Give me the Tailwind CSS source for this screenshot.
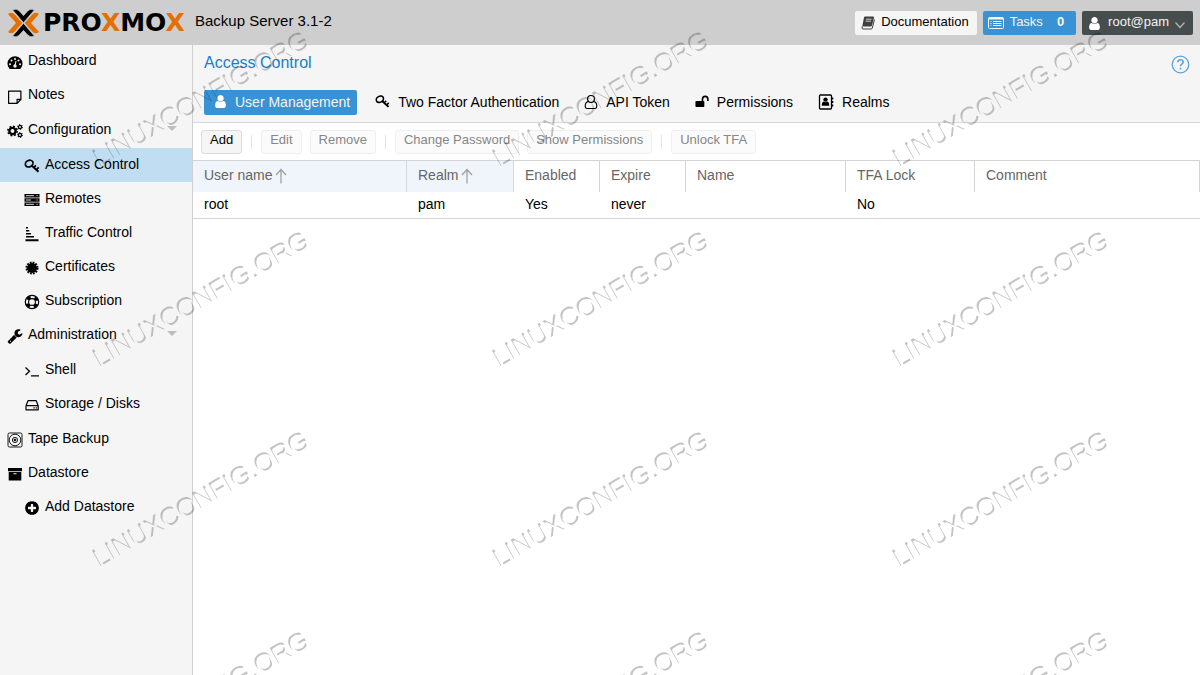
<!DOCTYPE html>
<html lang="en">
<head>
  <meta charset="utf-8">
  <meta name="viewport" content="width=device-width, initial-scale=1">
  <title>Proxmox Backup Server - Access Control</title>
  <script src="https://cdn.jsdelivr.net/npm/@tailwindcss/browser@4"></script>
</head>
<body class="min-h-screen flex flex-col bg-white text-black text-sm font-['Liberation_Sans',Arial,sans-serif]">

  <!-- shared icons -->
  <svg class="hidden" aria-hidden="true">
    <symbol id="i-user" viewBox="0 0 1792 1792"><path fill="currentColor" d="M1536 1399q0 109-62.5 187t-150.5 78h-854q-88 0-150.5-78t-62.5-187q0-85 8.5-160.5t31.5-152 58.5-131 94-89 134.5-34.5q131 128 313 128t313-128q76 0 134.5 34.5t94 89 58.5 131 31.5 152 8.5 160.5zm-256-887q0 159-112.5 271.5t-271.5 112.5-271.5-112.5-112.5-271.5 112.5-271.5 271.5-112.5 271.5 112.5 112.5 271.5z"/></symbol>
    <symbol id="i-key" viewBox="0 0 16 16">
      <g fill="none" stroke="currentColor">
        <ellipse cx="5.200" cy="5.600" rx="4" ry="3.200" stroke-width="1.700" transform="rotate(-28 5.200 5.600)"/>
        <path stroke-width="2" d="M7.600 7.400l6.900 6.300"/>
        <path stroke-width="1.700" d="M12.400 11.600l2.300-2.200M9.900 9.300l2-2"/>
      </g>
    </symbol>
    <symbol id="i-arrow" viewBox="0 0 12 16"><path fill="none" stroke="currentColor" stroke-width="1.300" d="M6 15.500V2M1 7l5-5.500L11 7"/></symbol>
  </svg>

  <header class="h-[45px] shrink-0 bg-[#cecece] flex items-center justify-between pl-2 pr-[7px]">
    <div class="flex items-center">
      <svg class="w-[31px] h-7" viewBox="0 0 93 84" fill="none" stroke-linejoin="round" aria-hidden="true">
        <path fill="#e57000" d="M0 15q12-8 21 2l22 25-22 25q-9 10-21 2l24-27z"/>
        <path fill="#e57000" d="M93 15q-12-8-21 2L50 42l22 25q9 10 21 2L69 42z"/>
        <path fill="#000" stroke="#cecece" stroke-width="2" d="M14 3q12-6 20 3l12.500 14L59 6q8-9 20-3L46.500 41z"/>
        <path fill="#000" stroke="#cecece" stroke-width="2" d="M14 81q12 6 20-3l12.500-14L59 78q8 9 20 3L46.500 43z"/>
      </svg>
      <span class="ml-1 w-[152px] font-['DejaVu_Sans',sans-serif] font-bold text-[25px] leading-7">PRO<span class="text-[#e57000]">X</span>MO<span class="text-[#e57000]">X</span></span>
      <span class="text-[15px] leading-5 pb-1">Backup Server 3.1-2</span>
    </div>
    <div class="flex items-center gap-1.5 text-[13px]">
      <button class="h-6 flex items-center gap-1.5 pl-1.5 pr-2 rounded-xs bg-[#f5f5f5]">
        <svg class="w-3.5 h-3.5 mt-px text-[#404040]" viewBox="0 0 14 14" aria-hidden="true">
          <path fill="currentColor" d="M4 .5h8q1.300 0 1 1.300L11 9.500q-.3 1-1.300 1H1.200L3 1.600Q3.200.5 4 .5z"/>
          <path fill="none" stroke="currentColor" d="M1.200 10.500q-.8 2.500.8 2.500h8.200q.8 0 1.100-1L13.500 3.500"/>
          <path stroke="#f5f5f5" stroke-width=".8" d="M5 3.200h5.500M4.600 5.200h5.500"/>
        </svg>
        <span class="pb-px">Documentation</span>
      </button>
      <button class="h-6 flex items-center gap-1.5 pl-[5px] pr-3 rounded-xs bg-[#3892d4] text-[#f5f5f5]">
        <svg class="w-4 h-3.5 mt-px" viewBox="0 0 16 14" fill="none" stroke="currentColor" aria-hidden="true">
          <rect x=".5" y="1.500" width="15" height="11" rx="1"/>
          <path stroke-width="2" d="M1 2.500h14"/>
          <path d="M2.500 5.500h1M5 5.500h8.500M2.500 7.500h1M5 7.500h8.500M2.500 9.500h1M5 9.500h8.500"/>
        </svg>
        <span class="pb-px">Tasks</span>
        <b class="pb-px ml-2">0</b>
      </button>
      <button class="h-6 flex items-center gap-1.5 pl-[5px] pr-2 rounded-xs bg-[#464d4d] text-[#f5f5f5]">
        <svg class="w-[15px] h-[15px] mt-px text-white" aria-hidden="true"><use href="#i-user"/></svg>
        <span class="pb-px">root@pam</span>
        <svg class="w-2.5 h-2 mt-1 text-[#b0b4b4]" viewBox="0 0 10 8" fill="none" stroke="currentColor" stroke-width="1.300" aria-hidden="true"><path d="M.5 1.500L5 6.500l4.500-5"/></svg>
      </button>
    </div>
  </header>

  <div class="flex-1 flex">
    <nav class="w-[193px] shrink-0 bg-[#f5f5f5] border-r border-[#d0d0d0]">
      <ul>
        <li>
          <a href="#" class="h-[34px] flex items-center gap-[5px] pl-[7px]">
            <svg class="w-4 h-4 mt-0.5" viewBox="0 0 16 16" aria-hidden="true">
              <path d="M2.300 13.500A7.500 7.500 0 1 1 13.700 13.500q-.4.500-1 .5H3.300q-.6 0-1-.5z"/>
              <g fill="#f5f5f5"><circle cx="3" cy="9.300" r="1"/><circle cx="4.500" cy="5.600" r="1"/><circle cx="8" cy="4" r="1"/><circle cx="11.500" cy="5.600" r="1"/><circle cx="13" cy="9.300" r="1"/><circle cx="8" cy="11" r="1.700"/></g>
              <path stroke="#f5f5f5" stroke-width="1" d="M8 11l1-5"/>
            </svg>
            <span class="pb-1">Dashboard</span>
          </a>
        </li>
        <li>
          <a href="#" class="h-[34px] flex items-center gap-[5px] pl-[7px]">
            <svg class="w-4 h-4 mt-0.5" viewBox="0 0 16 16" fill="none" stroke="currentColor" stroke-width="1.200" stroke-linejoin="round" aria-hidden="true"><path d="M1.600 2.200h12.300v8.300l-3.800 3.800H1.600zM13.900 10.300h-3.800v4"/></svg>
            <span class="pb-1">Notes</span>
          </a>
        </li>
        <li>
          <a href="#" class="h-[34px] flex items-center gap-[5px] pl-[7px]">
            <svg class="w-4 h-4 mt-0.5" viewBox="0 0 16 16" fill="none" stroke="currentColor" aria-hidden="true">
              <circle cx="5.500" cy="8" r="3.100" stroke-width="2.400"/>
              <circle cx="5.500" cy="8" r="4.700" stroke-width="1.500" stroke-dasharray="1.900 1.790"/>
              <circle cx="13" cy="4" r="1.600" stroke-width="1.300"/>
              <circle cx="13" cy="4" r="2.500" stroke-width="1" stroke-dasharray="1.200 1.420"/>
              <circle cx="13" cy="12" r="1.600" stroke-width="1.300"/>
              <circle cx="13" cy="12" r="2.500" stroke-width="1" stroke-dasharray="1.200 1.420"/>
            </svg>
            <span class="pb-[3px]">Configuration</span>
            <svg class="w-2.5 h-[5px] mb-1 ml-auto mr-[15px] text-[#bdbdbd]" viewBox="0 0 10 5" aria-hidden="true"><path fill="currentColor" d="M0 0h10L5 5z"/></svg>
          </a>
          <ul class="pt-px">
            <li>
              <a href="#" aria-current="page" class="h-[34px] flex items-center gap-[5px] pl-6 bg-[#c1ddf1]">
                <svg class="w-4 h-4 mt-0.5" aria-hidden="true"><use href="#i-key"/></svg>
                <span class="pb-[3px]">Access Control</span>
              </a>
            </li>
            <li>
              <a href="#" class="h-[34px] flex items-center gap-[5px] pl-6">
                <svg class="w-4 h-4 mt-0.5" viewBox="0 0 16 16" aria-hidden="true">
                  <path d="M.5 2h15v3.500H.5zM.5 6.300h15v3.500H.5zM.5 10.600h15v3.500H.5z"/>
                  <path stroke="#f5f5f5" stroke-width=".9" d="M2 3.700h8M2 8h5M2 12.300h8M12.500 3.700h1.200M12.500 8h1.200M12.500 12.300h1.200"/>
                </svg>
                <span class="pb-[3px]">Remotes</span>
              </a>
            </li>
            <li>
              <a href="#" class="h-[34px] flex items-center gap-[5px] pl-6">
                <svg class="w-4 h-4 mt-0.5" viewBox="0 0 16 16" aria-hidden="true"><path d="M2 1h2v1.500H2zM2 4h3.300v1.500H2zM2 7h5v1.500H2zM2 10h8v1.500H2zM1.500 13.200h13v2h-13z"/></svg>
                <span class="pb-[3px]">Traffic Control</span>
              </a>
            </li>
            <li>
              <a href="#" class="h-[34px] flex items-center gap-[5px] pl-6">
                <svg class="w-4 h-4 mt-0.5" viewBox="0 0 16 16" aria-hidden="true"><circle cx="8" cy="8" r="5"/><circle cx="8" cy="8" r="5.500" fill="none" stroke="currentColor" stroke-width="2" stroke-dasharray="1.750 1.130"/></svg>
                <span class="pb-[3px]">Certificates</span>
              </a>
            </li>
            <li>
              <a href="#" class="h-[34px] flex items-center gap-[5px] pl-6">
                <svg class="w-4 h-4 mt-0.5" viewBox="0 0 16 16" fill="none" stroke="currentColor" aria-hidden="true">
                  <circle cx="8" cy="8" r="6.700" stroke-width="1.200"/>
                  <circle cx="8" cy="8" r="3.400" stroke-width="1.100"/>
                  <circle cx="8" cy="8" r="5.100" stroke-width="3" stroke-dasharray="3.800 4.210" stroke-dashoffset="-2.100"/>
                </svg>
                <span class="pb-[3px]">Subscription</span>
              </a>
            </li>
          </ul>
        </li>
        <li>
          <a href="#" class="h-[34px] flex items-center gap-[5px] pl-[7px]">
            <svg class="w-4 h-4 mt-0.5" viewBox="0 0 1792 1792" aria-hidden="true"><path d="M448 1472q0-26-19-45t-45-19-45 19-19 45 19 45 45 19 45-19 19-45zm644-420l-682 682q-37 37-90 37-52 0-91-37l-106-108q-38-36-38-90 0-53 38-91l681-681q39 98 114.500 173.500t173.500 114.500zm634-435q0 39-23 106-47 134-164.500 217.500t-258.500 83.500q-185 0-316.500-131.500t-131.500-316.500 131.500-316.500 316.500-131.500q58 0 121.500 16.500t107.500 46.500q16 11 16 28t-16 28l-293 169v224l193 107q5-3 79-48.500t135.500-81 70.500-35.500q15 0 23.500 10t8.500 25z"/></svg>
            <span class="pb-[3px]">Administration</span>
            <svg class="w-2.5 h-[5px] mb-1 ml-auto mr-[15px] text-[#bdbdbd]" viewBox="0 0 10 5" aria-hidden="true"><path fill="currentColor" d="M0 0h10L5 5z"/></svg>
          </a>
          <ul class="py-px">
            <li>
              <a href="#" class="h-[34px] flex items-center gap-[5px] pl-6">
                <svg class="w-4 h-4 mt-0.5" viewBox="0 0 16 16" fill="none" stroke="currentColor" stroke-width="1.300" aria-hidden="true"><path d="M1.500 4.500l4 3.700-4 3.700M7 12.800h8"/></svg>
                <span class="pb-[3px]">Shell</span>
              </a>
            </li>
            <li>
              <a href="#" class="h-[34px] flex items-center gap-[5px] pl-6">
                <svg class="w-4 h-4 mt-0.5" viewBox="0 0 16 16" fill="none" stroke="currentColor" stroke-width="1.200" stroke-linejoin="round" aria-hidden="true"><path d="M2 8.700h12.200v4.100H2zM2 8.700l2-5h8.200l2 5M9.500 10.800h1.200M11.800 10.800H13"/></svg>
                <span class="pb-[3px]">Storage / Disks</span>
              </a>
            </li>
          </ul>
        </li>
        <li>
          <a href="#" class="h-[34px] flex items-center gap-[5px] pl-[7px]">
            <svg class="w-4 h-4 mt-0.5" viewBox="0 0 16 16" fill="none" stroke="currentColor" stroke-width=".9" aria-hidden="true">
              <rect x="1" y="1" width="14" height="14" rx="1.500"/>
              <circle cx="8" cy="8" r="5.800"/><circle cx="8" cy="8" r="2.600"/><circle cx="8" cy="8" r=".9" fill="currentColor"/>
            </svg>
            <span class="pb-[3px]">Tape Backup</span>
          </a>
        </li>
        <li>
          <a href="#" class="h-[34px] flex items-center gap-[5px] pl-[7px]">
            <svg class="w-4 h-4 mt-0.5" viewBox="0 0 16 16" aria-hidden="true"><path fill-rule="evenodd" d="M1 2h14v3.200H1zM1.700 6h12.600v8.500H1.700zM6.500 7.200v1h3v-1z"/></svg>
            <span class="pb-[3px]">Datastore</span>
          </a>
          <ul>
            <li>
              <a href="#" class="h-[34px] flex items-center gap-[5px] pl-6">
                <svg class="w-4 h-4 mt-0.5" viewBox="0 0 1792 1792" aria-hidden="true"><path d="M1344 960v-128q0-26-19-45t-45-19h-256v-256q0-26-19-45t-45-19h-128q-26 0-45 19t-19 45v256h-256q-26 0-45 19t-19 45v128q0 26 19 45t45 19h256v256q0 26 19 45t45 19h128q26 0 45-19t19-45v-256h256q26 0 45-19t19-45zm320-64q0 209-103 385.500t-279.500 279.500-385.500 103-385.500-103-279.500-279.500-103-385.500 103-385.500 279.500-279.500 385.500-103 385.500 103 279.500 279.500 103 385.500z"/></svg>
                <span class="pb-[3px]">Add Datastore</span>
              </a>
            </li>
          </ul>
        </li>
      </ul>
    </nav>

    <main class="flex-1 min-w-0">
      <div class="bg-[#f5f5f5] border-b border-[#d8d8d8] pb-[7px]">
        <div class="h-[45px] flex items-start justify-between pl-[11px] pr-2.5 pt-2">
          <h1 class="text-base leading-5 text-[#157fcc]">Access Control</h1>
          <button aria-label="Help" class="mt-0.5">
            <svg class="w-[19px] h-[19px] text-[#5ba3da]" viewBox="0 0 19 19" fill="none" stroke="currentColor" aria-hidden="true">
              <circle cx="9.500" cy="9.500" r="8.300" stroke-width="1.300"/>
              <path stroke-width="1.600" d="M6.800 7.300q.2-2.500 2.700-2.500t2.700 2.200q0 1.300-1.400 2.100t-1.300 2.200M9.500 12.700v1.700"/>
            </svg>
          </button>
        </div>
        <div role="tablist" class="flex gap-2 pl-[11px]">
          <button role="tab" aria-selected="true" class="h-[25px] flex items-center gap-2 pl-2.5 pr-[7px] pb-0.5 rounded-xs bg-[#3892d4] text-[#f5f5f5]">
            <svg class="w-[13px] h-[15px] text-white" viewBox="224 0 1344 1792" aria-hidden="true"><use href="#i-user" width="1792" height="1792"/></svg>
            User Management
          </button>
          <button role="tab" aria-selected="false" class="h-[25px] flex items-center gap-2 pl-2.5 pr-[7px] pb-0.5">
            <svg class="w-[15px] h-[15px]" aria-hidden="true"><use href="#i-key"/></svg>
            Two Factor Authentication
          </button>
          <button role="tab" aria-selected="false" class="h-[25px] flex items-center gap-2 pl-2.5 pr-[7px] pb-0.5">
            <svg class="w-3.5 h-4" viewBox="0 0 15 16" fill="none" stroke="currentColor" stroke-width="1.200" aria-hidden="true"><circle cx="7.500" cy="4.700" r="3.700"/><path d="M4.800 7.500Q1.300 8 1.300 12.400q0 2.600 2 2.600h8.400q2 0 2-2.600 0-4.400-3.500-4.900"/></svg>
            API Token
          </button>
          <button role="tab" aria-selected="false" class="h-[25px] flex items-center gap-2 pl-2.5 pr-[7px] pb-0.5">
            <svg class="w-3.5 h-[15px]" viewBox="0 0 15 15" aria-hidden="true"><rect x=".5" y="7" width="9.500" height="6.500" rx=".8"/><path fill="none" stroke="currentColor" stroke-width="1.700" d="M8 7.500V5q0-3 2.900-3t2.900 3v2"/></svg>
            Permissions
          </button>
          <button role="tab" aria-selected="false" class="h-[25px] flex items-center gap-2 pl-2.5 pr-[7px] pb-0.5">
            <svg class="w-4 h-4" viewBox="0 0 15 16" aria-hidden="true">
              <rect x="1" y="1" width="12" height="14" rx="1" fill="none" stroke="currentColor" stroke-width="1.300"/>
              <circle cx="7" cy="5.600" r="2.200"/><path d="M3.300 11.800q-.1-3.800 2-4.300 1.700 1.300 3.400 0 2.100.5 2 4.300z"/>
              <path d="M13.300 3.500h1.500v2h-1.500zM13.300 7h1.500v2h-1.500zM13.300 10.500h1.500v2h-1.500z"/>
            </svg>
            Realms
          </button>
        </div>
      </div>

      <div role="toolbar" class="h-[37px] flex items-center pl-2 text-[13px]">
        <button class="h-6 px-2 pb-0.5 border border-[#dcdcdc] rounded-[3px] bg-[#f5f5f5]">Add</button>
        <span class="w-px h-3.5 mx-[9px] bg-[#e4e4e4]"></span>
        <button disabled class="h-6 px-2 pb-0.5 border border-[#efefef] rounded-[3px] bg-[#fbfbfb] text-[#868686]">Edit</button>
        <button disabled class="h-6 px-2 pb-0.5 ml-2 border border-[#efefef] rounded-[3px] bg-[#fbfbfb] text-[#868686]">Remove</button>
        <span class="w-px h-3.5 mx-[9px] bg-[#e4e4e4]"></span>
        <button disabled class="h-6 px-2 pb-0.5 border border-[#efefef] rounded-[3px] bg-[#fbfbfb] text-[#868686]">Change Password</button>
        <button disabled class="h-6 px-2 pb-0.5 ml-2 border border-[#efefef] rounded-[3px] bg-[#fbfbfb] text-[#868686]">Show Permissions</button>
        <span class="w-px h-3.5 mx-[9px] bg-[#e4e4e4]"></span>
        <button disabled class="h-6 px-2 pb-0.5 border border-[#efefef] rounded-[3px] bg-[#fbfbfb] text-[#868686]">Unlock TFA</button>
      </div>

      <table class="w-full table-fixed border-separate border-spacing-0 border-y border-[#d4d4d4] text-left">
        <colgroup>
          <col class="w-[214px]"><col class="w-[107px]"><col class="w-[86px]"><col class="w-[86px]"><col class="w-40"><col class="w-[129px]"><col>
        </colgroup>
        <thead class="text-[#666]">
          <tr class="h-[31px]">
            <th class="pl-[11px] pb-[3px] font-normal border-r border-[#d0d6dc] bg-[#eff5fb]" aria-sort="ascending">User name<svg class="inline w-3 h-4 ml-[3px] text-[#a0a0a0]" aria-hidden="true"><use href="#i-arrow"/></svg></th>
            <th class="pl-[11px] pb-[3px] font-normal border-r border-[#d0d6dc] bg-[#eff5fb]" aria-sort="ascending">Realm<svg class="inline w-3 h-4 ml-[3px] text-[#a0a0a0]" aria-hidden="true"><use href="#i-arrow"/></svg></th>
            <th class="pl-[11px] pb-[3px] font-normal border-r border-[#d4d4d4]">Enabled</th>
            <th class="pl-[11px] pb-[3px] font-normal border-r border-[#d4d4d4]">Expire</th>
            <th class="pl-[11px] pb-[3px] font-normal border-r border-[#d4d4d4]">Name</th>
            <th class="pl-[11px] pb-[3px] font-normal border-r border-[#d4d4d4]">TFA Lock</th>
            <th class="pl-[11px] pb-[3px] font-normal border-r border-[#d4d4d4]">Comment</th>
          </tr>
        </thead>
        <tbody>
          <tr class="h-[26px]">
            <td class="pl-[11px] pb-0.5">root</td>
            <td class="pl-[11px] pb-0.5">pam</td>
            <td class="pl-[11px] pb-0.5">Yes</td>
            <td class="pl-[11px] pb-0.5">never</td>
            <td></td>
            <td class="pl-[11px] pb-0.5">No</td>
            <td></td>
          </tr>
        </tbody>
      </table>
    </main>
  </div>

  <!-- embossed watermark, tiled over the whole window -->
  <svg class="fixed inset-0 w-full h-full pointer-events-none font-['Liberation_Sans',Arial,sans-serif] text-[26px]" aria-hidden="true">
    <defs>
      <mask id="emboss" maskUnits="userSpaceOnUse" x="0" y="0" width="400" height="200">
        <rect width="400" height="200" fill="#fff"/>
        <text transform="translate(101 169) rotate(-30)" fill="#000">LINUXCONFIG.ORG</text>
      </mask>
      <pattern id="watermark" width="400" height="200" patternUnits="userSpaceOnUse">
        <g mask="url(#emboss)">
          <text transform="translate(99 167) rotate(-30)" fill="#000" fill-opacity=".23">LINUXCONFIG.ORG</text>
        </g>
      </pattern>
    </defs>
    <rect width="100%" height="100%" fill="url(#watermark)"/>
  </svg>
</body>
</html>
